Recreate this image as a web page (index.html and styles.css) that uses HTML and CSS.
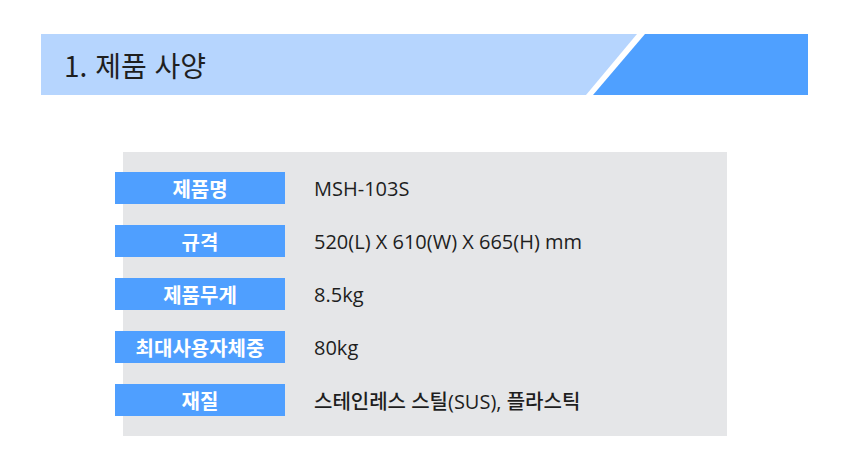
FILE: index.html
```html
<!DOCTYPE html>
<html lang="ko">
<head>
<meta charset="utf-8">
<link rel="stylesheet" href="styles.css">
</head>
<body>
<div class="page">
  <div class="header">
    <div class="title"><h1>1. 제품 사양</h1></div>
    <div class="accent"></div>
  </div>
  <div class="spec">
    <div class="row"><div class="label">제품명</div><div class="value">MSH-103S</div></div>
    <div class="row"><div class="label">규격</div><div class="value">520(L) X 610(W) X 665(H) mm</div></div>
    <div class="row"><div class="label">제품무게</div><div class="value">8.5kg</div></div>
    <div class="row"><div class="label">최대사용자체중</div><div class="value">80kg</div></div>
    <div class="row"><div class="label">재질</div><div class="value">스테인레스 스틸(SUS), 플라스틱</div></div>
  </div>
</div>
</body>
</html>
```
FILE: styles.css
```css
html, body {
  margin: 0;
  padding: 0;
  background: #ffffff;
}
body {
  font-family: "Noto Sans CJK KR", "Noto Sans", sans-serif;
  color: #1e1e1e;
}
.page {
  padding: 34px 0 0 41px;
}
.header {
  display: flex;
  width: 767px;
  height: 61px;
}
.title {
  width: 596px;
  flex: none;
  background: #b6d5fe;
  clip-path: polygon(0 0, 100% 0, calc(100% - 51px) 100%, 0 100%);
  display: flex;
  align-items: center;
}
.title h1 {
  margin: 0 0 0 23px;
  font-size: 28px;
  font-weight: 400;
  color: #1f1f1f;
  line-height: 1;
}
.accent {
  flex: 1;
  margin-left: -44px;
  background: #4fa0ff;
  clip-path: polygon(52px 0, 100% 0, 100% 100%, 0 100%);
}
.spec {
  margin: 57px 0 0 82px;
  width: 604px;
  height: 284px;
  box-sizing: border-box;
  background: #e5e6e8;
  padding: 20px 0 0 0;
  display: flex;
  flex-direction: column;
  gap: 21px;
}
.row {
  display: flex;
  align-items: center;
  margin-left: -8px;
}
.label {
  width: 170px;
  height: 32px;
  flex: none;
  background: #4f9fff;
  color: #ffffff;
  font-weight: 700;
  font-size: 20px;
  display: flex;
  align-items: center;
  justify-content: center;
}
.value {
  margin-left: 29px;
  font-family: "Open Sans", "Noto Sans CJK KR", sans-serif;
  font-size: 20px;
  font-weight: 500;
}
```
